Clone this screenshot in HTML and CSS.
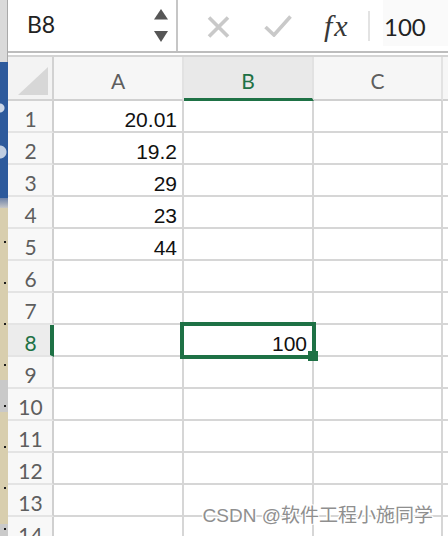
FILE: index.html
```html
<!DOCTYPE html>
<html lang="zh">
<head>
<meta charset="utf-8">
<title>Sheet</title>
<link rel="stylesheet" href="styles.css">
</head>
<body>
<div class="screen">
  <div class="strip">
    <div class="seg-top"></div>
    <div class="seg-blue"></div>
    <div class="seg-mid"></div>
    <div class="seg-lower"></div>
  </div>
  <div class="app">
    <div class="fbar">
      <div class="namebox">
        <span class="ref">B8</span>
        <svg class="spin" width="14" height="33" viewBox="0 0 14 33"><polygon points="0,10.5 7,0 14,10.5" fill="#565656"/><polygon points="0,22 14,22 7,33" fill="#565656"/></svg>
      </div>
      <svg class="ico-x" width="23" height="22" viewBox="0 0 23 22"><path d="M2 1.5 L21 20.5 M21 1.5 L2 20.5" stroke="#c9c9c9" stroke-width="3.6" fill="none"/></svg>
      <svg class="ico-check" width="28" height="22" viewBox="0 0 28 22"><path d="M1.5 12 L10 20 L26.5 1.5" stroke="#c9c9c9" stroke-width="3.6" fill="none"/></svg>
      <span class="fx">fx</span>
      <span class="fsep"></span>
      <div class="finput">100</div>
    </div>
    <div class="fgap"></div>
    <div class="sheet">
      <div class="corner"><svg width="30" height="28" viewBox="0 0 30 28"><polygon points="30,0 30,28 0,28" fill="#d7d7d7"/></svg></div>
      <div class="ch">A</div>
      <div class="ch sel">B</div>
      <div class="ch">C</div>
      <div class="ch"></div>

      <div class="rh">1</div><div class="c">20.01</div><div class="c"></div><div class="c"></div><div class="c"></div>
      <div class="rh">2</div><div class="c">19.2</div><div class="c"></div><div class="c"></div><div class="c"></div>
      <div class="rh">3</div><div class="c">29</div><div class="c"></div><div class="c"></div><div class="c"></div>
      <div class="rh">4</div><div class="c">23</div><div class="c"></div><div class="c"></div><div class="c"></div>
      <div class="rh">5</div><div class="c">44</div><div class="c"></div><div class="c"></div><div class="c"></div>
      <div class="rh">6</div><div class="c"></div><div class="c"></div><div class="c"></div><div class="c"></div>
      <div class="rh">7</div><div class="c"></div><div class="c"></div><div class="c"></div><div class="c"></div>
      <div class="rh sel">8</div><div class="c"></div><div class="c active">100<span class="selbox"></span><span class="handle"></span></div><div class="c"></div><div class="c"></div>
      <div class="rh">9</div><div class="c"></div><div class="c"></div><div class="c"></div><div class="c"></div>
      <div class="rh">10</div><div class="c"></div><div class="c"></div><div class="c"></div><div class="c"></div>
      <div class="rh">11</div><div class="c"></div><div class="c"></div><div class="c"></div><div class="c"></div>
      <div class="rh">12</div><div class="c"></div><div class="c"></div><div class="c"></div><div class="c"></div>
      <div class="rh">13</div><div class="c"></div><div class="c"></div><div class="c"></div><div class="c"></div>
      <div class="rh">14</div><div class="c"></div><div class="c"></div><div class="c"></div><div class="c"></div>
    </div>
  </div>
  <div class="watermark">CSDN @软件工程小施同学</div>
</div>
</body>
</html>
```
FILE: styles.css
```css
* { box-sizing: border-box; }
html, body { margin: 0; padding: 0; }
body {
  width: 448px;
  height: 536px;
  overflow: hidden;
  background: #fff;
  font-family: Lato, "Liberation Sans", sans-serif;
}
.screen {
  display: flex;
  width: 448px;
  height: 536px;
  position: relative;
  overflow: hidden;
}

/* background window strip on the left */
.strip {
  width: 8px;
  flex: none;
  display: flex;
  flex-direction: column;
}
.seg-top { height: 62px; background: #dadada; box-shadow: inset -1px 0 #a9a9a9; }
.seg-blue {
  height: 136px;
  background:
    radial-gradient(circle at 0 46px, rgba(255,255,255,0.75) 0 4px, transparent 5px),
    radial-gradient(circle at 0 90px, rgba(255,255,255,0.7) 0 6px, transparent 7px),
    #2d5a9c;
}
.seg-mid { height: 10px; background: linear-gradient(#6d82a8, #c7c7c7); }
.seg-lower {
  flex: 1;
  background:
    repeating-linear-gradient(to bottom, #1c1c1c 0 2px, transparent 2px 41px) 4px 33px / 2px 100% no-repeat,
    linear-gradient(to bottom, #d8ceae 0 172px, #c9c9c9 172px 204px, #d8ceae 204px 316px, #cacaca 316px);
}

.app {
  flex: 1;
  display: flex;
  flex-direction: column;
  min-width: 0;
}

/* formula bar */
.fbar {
  height: 53px;
  flex: none;
  border-bottom: 2px solid #bdbdbd;
  display: flex;
  align-items: center;
}
.namebox {
  width: 170px;
  height: 100%;
  border-right: 2px solid #c6c6c6;
  display: flex;
  align-items: center;
  padding: 0 8px 0 19px;
}
.ref {
  flex: 1;
  font-size: 23px;
  line-height: 27px;
  color: #222;
  padding-bottom: 2px;
}
.spin { display: block; }
.ico-x { margin-left: 29px; margin-top: 2px; display: block; }
.ico-check { margin-left: 34px; display: block; }
.fx {
  width: 28px;
  margin-left: 32px;
  font-family: "Liberation Serif", serif;
  font-style: italic;
  font-size: 30px;
  line-height: 33px;
  letter-spacing: 2px;
  color: #383838;
}
.fsep {
  width: 2px;
  height: 30px;
  margin-left: 16px;
  background: #e3e3e3;
}
.finput {
  flex: 1;
  align-self: flex-start;
  height: 46px;
  margin-left: 13px;
  padding: 13px 0 0 1px;
  background: #fafafa;
  font-size: 24px;
  line-height: 28px;
  color: #222;
}
.fgap { height: 2px; flex: none; }

/* sheet grid */
.sheet {
  border-top: 2px solid #d3d3d3;
  display: grid;
  grid-template-columns: 46px 130px 130px 129px 1fr;
  grid-template-rows: 44px;
  grid-auto-rows: 32px;
}
.corner {
  background: #f3f3f3;
  border-right: 2px solid #d2d2d2;
  border-bottom: 2px solid #d2d2d2;
  display: flex;
  align-items: flex-end;
  justify-content: flex-end;
  padding: 0 4px 4px 0;
}
.corner svg { display: block; }
.ch {
  background: #f6f6f6;
  border-right: 2px solid #e2e2e2;
  border-bottom: 2px solid #d0d0d0;
  display: flex;
  align-items: flex-end;
  justify-content: center;
  padding-bottom: 6px;
  font-size: 21px;
  line-height: 24px;
  color: #5e5e5e;
}
.ch.sel {
  background: #e9e9e9;
  color: #1e7145;
  border-bottom: 3px solid #1e7145;
  padding-bottom: 5px;
}
.rh {
  background: #f8f8f8;
  border-right: 2px solid #d0d0d0;
  border-bottom: 2px solid #e4e4e4;
  display: flex;
  align-items: flex-end;
  justify-content: center;
  font-size: 21px;
  line-height: 24px;
  color: #5e5e5e;
  padding-left: 1px;
}
.rh.sel {
  background: #ececec;
  color: #1e7145;
  border-right: 4px solid #1e7145;
  padding-left: 3px;
}
.c {
  border-right: 2px solid #d6d6d6;
  border-bottom: 2px solid #d6d6d6;
  display: flex;
  align-items: flex-end;
  justify-content: flex-end;
  padding-right: 5px;
  font-family: "Liberation Sans", Arial, sans-serif;
  font-size: 21px;
  line-height: 23px;
  color: #111;
}
.c.active { position: relative; }
.selbox {
  position: absolute;
  left: -4px;
  top: -3px;
  right: -4px;
  bottom: -4px;
  border: 4px solid #1e7145;
}
.handle {
  position: absolute;
  right: -6px;
  bottom: -6px;
  width: 10px;
  height: 10px;
  background: #1e7145;
}

.watermark {
  position: absolute;
  right: 15px;
  top: 505px;
  font-family: "Liberation Sans", "Noto Sans CJK SC", sans-serif;
  font-size: 19px;
  line-height: 22px;
  color: #8f8f8f;
  text-shadow: 1px 0 #fff, -1px 0 #fff, 0 1px #fff, 0 -1px #fff, 1px 1px #fff, -1px -1px #fff, 1px -1px #fff, -1px 1px #fff;
  white-space: nowrap;
}
```
